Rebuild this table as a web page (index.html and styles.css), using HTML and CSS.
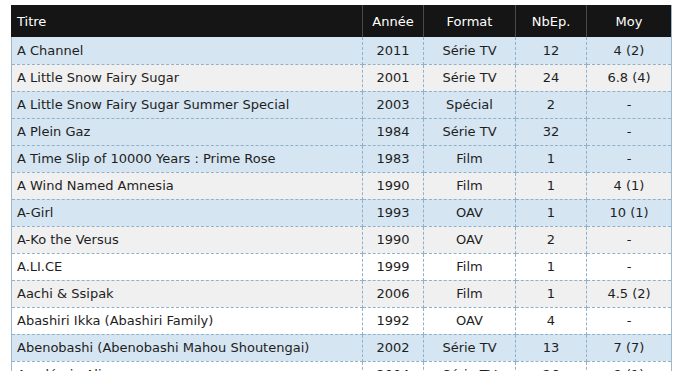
FILE: index.html
```html
<!DOCTYPE html>
<html lang="fr">
<head>
<meta charset="utf-8">
<title>Liste</title>
<link rel="stylesheet" href="styles.css">
</head>
<body>
<div class="wrap">
<table class="list">
<colgroup>
<col class="c-titre"><col class="c-annee"><col class="c-format"><col class="c-nb"><col class="c-moy">
</colgroup>
<thead>
<tr><th class="left">Titre</th><th>Année</th><th>Format</th><th>NbEp.</th><th>Moy</th></tr>
</thead>
<tbody>
<tr class="blue"><td class="left">A Channel</td><td>2011</td><td>Série TV</td><td>12</td><td>4 (2)</td></tr>
<tr class="gray"><td class="left">A Little Snow Fairy Sugar</td><td>2001</td><td>Série TV</td><td>24</td><td>6.8 (4)</td></tr>
<tr class="blue"><td class="left">A Little Snow Fairy Sugar Summer Special</td><td>2003</td><td>Spécial</td><td>2</td><td>-</td></tr>
<tr class="blue"><td class="left">A Plein Gaz</td><td>1984</td><td>Série TV</td><td>32</td><td>-</td></tr>
<tr class="blue"><td class="left">A Time Slip of 10000 Years : Prime Rose</td><td>1983</td><td>Film</td><td>1</td><td>-</td></tr>
<tr class="gray"><td class="left">A Wind Named Amnesia</td><td>1990</td><td>Film</td><td>1</td><td>4 (1)</td></tr>
<tr class="blue"><td class="left">A-Girl</td><td>1993</td><td>OAV</td><td>1</td><td>10 (1)</td></tr>
<tr class="gray"><td class="left">A-Ko the Versus</td><td>1990</td><td>OAV</td><td>2</td><td>-</td></tr>
<tr class="white"><td class="left">A.LI.CE</td><td>1999</td><td>Film</td><td>1</td><td>-</td></tr>
<tr class="gray"><td class="left">Aachi &amp; Ssipak</td><td>2006</td><td>Film</td><td>1</td><td>4.5 (2)</td></tr>
<tr class="white"><td class="left">Abashiri Ikka (Abashiri Family)</td><td>1992</td><td>OAV</td><td>4</td><td>-</td></tr>
<tr class="blue"><td class="left">Abenobashi (Abenobashi Mahou Shoutengai)</td><td>2002</td><td>Série TV</td><td>13</td><td>7 (7)</td></tr>
<tr class="white"><td class="left">Académie Alice</td><td>2004</td><td>Série TV</td><td>26</td><td>8 (1)</td></tr>
</tbody>
</table>
</div>
</body>
</html>
```
FILE: styles.css
```css
html, body {
  margin: 0;
  padding: 0;
  background: #ffffff;
}
.wrap {
  padding: 5px 0 0 11px;
}
.list {
  border-collapse: collapse;
  table-layout: fixed;
  width: 660px;
  font-family: "DejaVu Sans", Verdana, sans-serif;
  font-size: 13px;
  color: #1e1e1e;
}
.c-titre { width: 351px; }
.c-annee { width: 61px; }
.c-format { width: 92px; }
.c-nb { width: 71px; }
.c-moy { width: 85px; }
.list th {
  background: #151515;
  color: #ffffff;
  font-weight: normal;
  height: 32px;
  padding: 0 5px;
  text-align: center;
  border-left: 1px solid #4a4a4a;
  border-right: 1px solid #4a4a4a;
  box-sizing: border-box;
}
.list th:first-child { border-left: 1px solid #151515; }
.list th:last-child { border-right: 1px solid #9cb8cc; }
.list td {
  height: 27px;
  padding: 0 5px;
  text-align: center;
  border-bottom: 1px dashed #8fb1c9;
  border-left: 1px dashed #8fb1c9;
  border-right: 1px dashed #8fb1c9;
  box-sizing: border-box;
  white-space: nowrap;
}
.list td:first-child { border-left: 1px solid #9cb8cc; }
.list td:last-child { border-right: 1px solid #9cb8cc; }
.list .left { text-align: left; }
.blue { background: #d5e5f1; }
.gray { background: #f0f0f0; }
.white { background: #ffffff; }
```
